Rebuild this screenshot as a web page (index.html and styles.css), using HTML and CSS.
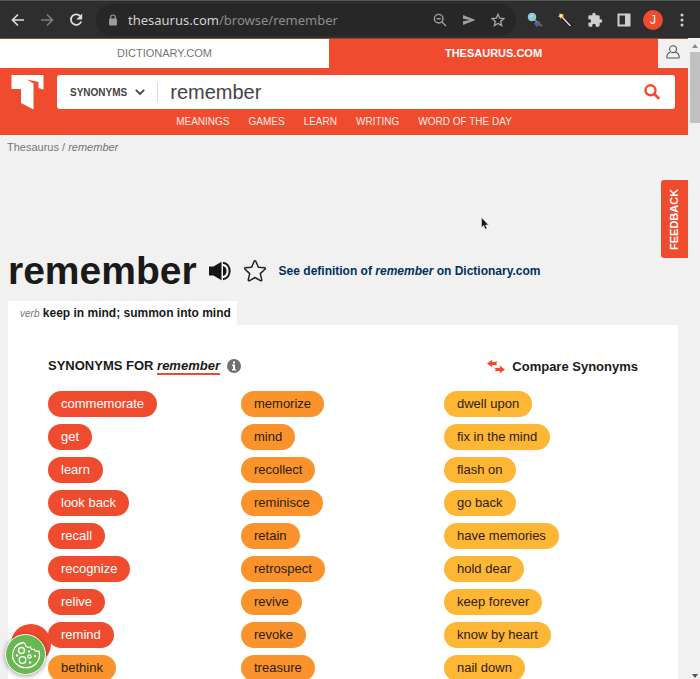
FILE: index.html
```html
<!DOCTYPE html>
<html lang="en">
<head>
<meta charset="utf-8">
<title>Synonyms of remember | Thesaurus.com</title>
<link rel="stylesheet" href="styles.css">
</head>
<body>
<div class="toolbar">
  <div class="nav-buttons">
    <button class="tool" aria-label="Back"><svg width="16" height="16" viewBox="0 0 16 16" fill="none" stroke="#dcdcdc" stroke-width="1.7"><path d="M14 8H3M8 2.500 2.500 8 8 13.500"/></svg></button>
    <button class="tool" aria-label="Forward"><svg width="16" height="16" viewBox="0 0 16 16" fill="none" stroke="#7c7c7c" stroke-width="1.7"><path d="M2 8h11M8 2.500 13.500 8 8 13.500"/></svg></button>
    <button class="tool" aria-label="Reload"><svg width="16" height="16" viewBox="0 0 16 16"><path d="M12.600 4.600A5.300 5.300 0 1 0 13.200 9.500" fill="none" stroke="#dcdcdc" stroke-width="1.800"/><path d="M14.200 1.600v5.900H8.300z" fill="#dcdcdc"/></svg></button>
  </div>
  <div class="omnibox">
    <svg width="10" height="12" viewBox="0 0 10 12"><rect x="1" y="4.500" width="8" height="7" rx="1" fill="#9a9a9a"/><path d="M2.700 5V3.300a2.300 2.300 0 0 1 4.600 0V5" fill="none" stroke="#9a9a9a" stroke-width="1.200"/></svg>
    <span class="url"><b>thesaurus.com</b>/browse/remember</span>
    <button class="tool" aria-label="Zoom out"><svg width="14" height="14" viewBox="0 0 14 14" fill="none" stroke="#a0a0a0" stroke-width="1.400"><circle cx="5.700" cy="5.700" r="4.300"/><path d="M9 9l4 4M3.700 5.700h4" /></svg></button>
    <button class="tool" aria-label="Share"><svg width="14" height="14" viewBox="0 0 14 14"><path d="M1 2l12.500 5L1 12V8.200L8 7 1 5.800z" fill="#a0a0a0"/></svg></button>
    <button class="tool" aria-label="Bookmark"><svg width="14" height="14" viewBox="0 0 14 14" fill="none" stroke="#a8a8a8" stroke-width="1.300"><path d="M7 1.300l1.700 3.900 4.200.4-3.200 2.800 1 4.200L7 10.400l-3.700 2.200 1-4.200L1.100 5.600l4.200-.4z"/></svg></button>
  </div>
  <div class="extensions">
    <button class="tool" aria-label="Search extension"><svg width="16" height="16" viewBox="0 0 16 16"><path d="M7 11.500l1.500-2 3-.5 2 1.500-.5 3-2 .5-1.500 1-1-1.500z" fill="#49658f"/><path d="M12.500 13l2.500-1-.5 3z" fill="#a36a45"/><circle cx="5" cy="5" r="3.800" fill="#83ccd8" stroke="#b5c8cd"/><path d="M3 4.800l2-1.500" stroke="#e5fafc"/><path d="M7.800 7.800l2.200 2.200" stroke="#8a9ba5" stroke-width="1.300"/></svg></button>
    <button class="tool" aria-label="Magic wand"><svg width="16" height="16" viewBox="0 0 16 16"><path d="M4 4l10 10.500" stroke="#141414" stroke-width="3"/><path d="M5.500 5.500l8 8.500" stroke="#dedede" stroke-width="1.500"/><path d="M3.700.8l1 1.600 2.100-.4-.6 1.900.9 1.600-2.100.2-1.300 1.400-.8-1.800-1.900-.8 1.500-1.100-.2-2.100 1.700.9z" fill="#f6b64e"/><circle cx="3.900" cy="3.700" r="1.400" fill="#fff0c0"/></svg></button>
    <button class="tool" aria-label="Extensions"><svg width="16" height="16" viewBox="0 0 24 24"><path d="M20.500 11H19V7a2 2 0 0 0-2-2h-4V3.500a2.500 2.500 0 0 0-5 0V5H4a2 2 0 0 0-2 2v3.800h1.500a2.700 2.700 0 0 1 0 5.400H2V20a2 2 0 0 0 2 2h3.800v-1.500a2.700 2.700 0 0 1 5.400 0V22H17a2 2 0 0 0 2-2v-4h1.500a2.500 2.500 0 0 0 0-5z" fill="#cfcfcf"/></svg></button>
    <button class="tool" aria-label="Side panel"><svg width="14" height="14" viewBox="0 0 14 14"><path d="M.5.500h13v13H.5zM2.500 2.500v9h5.500v-9z" fill="#cfcfcf" fill-rule="evenodd"/></svg></button>
    <button class="avatar">J</button>
    <button class="tool" aria-label="Menu"><svg width="4" height="14" viewBox="0 0 4 14" fill="#d0d0d0"><circle cx="2" cy="2" r="1.500"/><circle cx="2" cy="7" r="1.500"/><circle cx="2" cy="12" r="1.500"/></svg></button>
  </div>
</div>
<div class="viewport">
  <div class="page">
    <header>
      <div class="sites">
        <a class="site" href="#">DICTIONARY.COM</a>
        <a class="site current" href="#">THESAURUS.COM</a>
        <a class="account" href="#" aria-label="Account"><svg width="14" height="14" viewBox="0 0 14 14" fill="none" stroke="#555" stroke-width="1.100"><circle cx="7" cy="4.200" r="3.400"/><path d="M4.300 7.200C1.800 8 .8 9.800.7 12.200q0 .8.800.8h11q.8 0 .8-.8C13.200 9.800 12.200 8 9.700 7.200"/></svg></a>
      </div>
      <div class="search-row">
        <a class="logo" href="#" aria-label="Thesaurus.com"><svg width="33" height="35" viewBox="0 0 33 35"><path d="M.5 0H32.500V14.500L27.500 13V7L16 4.500 22.500 8.500V34.500L10 28V14H.5z" fill="#fff"/></svg></a>
        <form class="search">
          <button class="mode" type="button">SYNONYMS <svg width="10" height="6" viewBox="0 0 10 6" fill="none" stroke="#444" stroke-width="1.800"><path d="M.8.800 5 5 9.200.800"/></svg></button>
          <input class="query" type="text" value="remember" aria-label="Search">
          <button class="go" type="button" aria-label="Search"><svg width="16" height="16" viewBox="0 0 16 16" fill="none" stroke="#ef4b2e"><circle cx="6.500" cy="6.300" r="5" stroke-width="2.400"/><path d="M10 9.800l5.200 5" stroke-width="2.800"/></svg></button>
        </form>
      </div>
      <nav class="links"><a href="#">MEANINGS</a><a href="#">GAMES</a><a href="#">LEARN</a><a href="#">WRITING</a><a href="#">WORD OF THE DAY</a></nav>
    </header>
    <main>
      <div class="crumbs"><a href="#">Thesaurus</a> / <i>remember</i></div>
      <div class="headline">
        <h1>remember</h1>
        <button class="tool" aria-label="Listen"><svg width="22" height="20" viewBox="0 0 22 20"><path d="M0 5.500h4.500L12.500 .800v18.400L4.500 14.500H0z" fill="#161616"/><path d="M14 5q3.500 1 3.500 5t-3.500 5z" fill="#161616"/><path d="M14 1.800c8.800 1.200 8.800 15.200 0 16.400" fill="none" stroke="#161616" stroke-width="2"/></svg></button>
        <button class="tool" aria-label="Save word"><svg width="24" height="22" viewBox="0 0 24 22" fill="none" stroke="#222" stroke-width="1.500" stroke-linejoin="round"><path d="M11.100 1.500q.9-1.300 1.800 0l2.500 5.700 6 .6q1.500.3.500 1.500l-4.600 4.300 1.400 6q.2 1.700-1.300 1L12 17.500l-5.400 3.100q-1.500.7-1.300-1l1.400-6L2.100 9.300q-1-1.200.5-1.500l6-.6z"/></svg></button>
        <a class="definition" href="#">See definition of <i>remember</i> on Dictionary.com</a>
      </div>
      <button class="sense"><i>verb</i> <b>keep in mind; summon into mind</b></button>
      <section class="card">
        <div class="card-head">
          <h2>SYNONYMS FOR <em>remember</em></h2>
          <button class="tool" aria-label="Information"><svg width="14" height="14" viewBox="0 0 14 14"><circle cx="7" cy="7" r="7" fill="#707070"/><path d="M6 2.500h2v2H6zM5 5.500h3v4.500h1v1.500H5V10h1V7H5z" fill="#fff"/></svg></button>
          <a class="compare" href="#"><svg width="18" height="15" viewBox="0 0 18 15" fill="#ef4b2e"><path d="M0 4.500 5.500.500 5 3 11 2.800 9 4.600 10.500 6.300 5 6 5.500 8.500zM18 10.500l-5.500-4 .5 2.500-6-.2 2 1.800-1.500 1.700 5.500-.3-.5 2.500z"/></svg>Compare Synonyms</a>
        </div>
        <div class="columns">
          <ul>
            <li><a href="#">commemorate</a></li><li><a href="#">get</a></li><li><a href="#">learn</a></li><li><a href="#">look back</a></li><li><a href="#">recall</a></li><li><a href="#">recognize</a></li><li><a href="#">relive</a></li><li><a href="#">remind</a></li><li><a class="medium" href="#">bethink</a></li>
          </ul>
          <ul>
            <li><a class="medium" href="#">memorize</a></li><li><a class="medium" href="#">mind</a></li><li><a class="medium" href="#">recollect</a></li><li><a class="medium" href="#">reminisce</a></li><li><a class="medium" href="#">retain</a></li><li><a class="medium" href="#">retrospect</a></li><li><a class="medium" href="#">revive</a></li><li><a class="medium" href="#">revoke</a></li><li><a class="medium" href="#">treasure</a></li>
          </ul>
          <ul class="weak">
            <li><a href="#">dwell upon</a></li><li><a href="#">fix in the mind</a></li><li><a href="#">flash on</a></li><li><a href="#">go back</a></li><li><a href="#">have memories</a></li><li><a href="#">hold dear</a></li><li><a href="#">keep forever</a></li><li><a href="#">know by heart</a></li><li><a href="#">nail down</a></li>
          </ul>
        </div>
      </section>
    </main>
  </div>
  <div class="scrollbar">
    <svg width="6" height="4" viewBox="0 0 6 4"><path d="M0 4l3-4 3 4z" fill="#8a8a8a"/></svg>
    <div class="thumb"></div>
    <svg width="6" height="4" viewBox="0 0 6 4"><path d="M0 0h6L3 4z" fill="#505050"/></svg>
  </div>
  <button class="feedback">FEEDBACK</button>
  <div class="bubble"></div>
  <button class="cookies" aria-label="Cookie settings"><svg width="30" height="28" viewBox="0 0 30 28" fill="none" stroke="#fff" stroke-width="1.300"><path d="M12.500 1.500C5.500 2.500 1.500 8 1.500 14c0 7 6 12.700 13.500 12.700S28.500 21 28.500 14c0-1.500-.2-2.700-.7-4-2 .8-3.800.2-4.300-1.700-2.300.7-3.900-.3-3.900-2.300-2.500 1-4.800.2-5-1.800-.1-1-.8-2-2.100-2.700z"/><circle cx="10.500" cy="9.500" r="3"/><circle cx="11.500" cy="19" r="3.300"/><circle cx="18.500" cy="15.500" r="1.700"/><g fill="#fff" stroke="none"><circle cx="6" cy="14.500" r="1.200"/><circle cx="18" cy="10.500" r="1.200"/><circle cx="19" cy="21.500" r="1.300"/><circle cx="24" cy="15" r="1.200"/></g></svg></button>
  <svg class="pointer" width="8" height="13" viewBox="0 0 8 13"><path d="M.5.500v10l2.200-2 1.500 3.700 1.800-.8L4.500 8h3z" fill="#161616" stroke="#ddd" stroke-width=".6"/></svg>
</div>
</body>
</html>
```
FILE: styles.css
```css
* { box-sizing: border-box; }
body {
  margin: 0;
  height: 100vh;
  display: flex;
  flex-direction: column;
  overflow: hidden;
  background: #f1f1f1;
  color: #1a1a1a;
  font-family: "Liberation Sans", Arial, sans-serif;
}
a { color: inherit; text-decoration: none; }
button { border: 0; padding: 0; margin: 0; background: none; color: inherit; font-family: inherit; }
svg { display: block; }
.tool { flex: none; }

.toolbar {
  flex: none;
  display: flex;
  align-items: center;
  height: 38px;
  padding-right: 16px;
  background: #2e2e2e;
  border-top: 1px solid #555;
}
.nav-buttons { display: flex; gap: 13px; padding: 0 12px 0 10px; }
.omnibox {
  flex: 1;
  display: flex;
  align-items: center;
  gap: 15px;
  height: 32px;
  padding: 0 11px 0 12px;
  border-radius: 16px;
  background: #272727;
}
.url {
  flex: 1;
  margin-left: -5px;
  color: #8d8d8d;
  font: 13px "Noto Sans", sans-serif;
}
.url b { color: #d2d2d2; font-weight: 400; }
.extensions { display: flex; align-items: center; gap: 14px; padding-left: 11px; }
.avatar {
  width: 20px;
  height: 20px;
  margin: 0 3px 0 -2px;
  border-radius: 50%;
  background: #ef4b2e;
  color: #fff;
  font-size: 12px;
}

.viewport { position: relative; flex: 1; display: flex; min-height: 0; }
.page { flex: 1; overflow: hidden; }
header { background: #ef4b2e; }
.sites { display: flex; height: 30px; border-top: 1px solid #8a4a3e; }
.site {
  flex: 1;
  display: grid;
  place-items: center;
  padding-bottom: 2px;
  background: #fff;
  color: #757575;
  font-size: 11px;
}
.current { background: #ef4b2e; color: #fff; font-weight: 700; }
.account { display: grid; place-items: center; width: 30px; padding-bottom: 4px; background: #f1f1f1; }
.search-row { display: flex; gap: 13px; padding: 7px 13px 0 11px; }
.search {
  flex: 1;
  display: flex;
  align-items: center;
  height: 34px;
  border-radius: 3px;
  background: #fff;
}
.mode {
  display: flex;
  align-items: center;
  gap: 8px;
  height: 20px;
  padding: 0 12px 0 13px;
  border-right: 1px solid #ddd;
  color: #444;
  font-size: 10px;
  font-weight: 700;
}
.query {
  flex: 1;
  min-width: 0;
  padding: 0 12px;
  border: 0;
  outline: 0;
  background: none;
  color: #444;
  font: 20px/22px "Liberation Sans", Arial, sans-serif;
}
.go { padding: 0 15px; }
.links {
  display: flex;
  justify-content: center;
  gap: 19px;
  padding: 6px 0 8px;
  color: #ffeae6;
  font-size: 10px;
  line-height: 11px;
}

main { padding: 6px 10px 0 8px; }
.crumbs { margin-left: -1px; color: #757575; font-size: 11px; line-height: 13px; }
.headline { display: flex; align-items: center; gap: 12px; margin-top: 92px; }
h1 { margin: 0; font-size: 39px; line-height: 50px; }
.definition { color: #00305f; font-size: 12px; font-weight: 700; }
.sense {
  display: block;
  height: 24px;
  margin-top: 5px;
  padding: 0 6px 0 12px;
  background: #fff;
  color: #1a1a1a;
  font-size: 12px;
}
.sense i { color: #757575; font-size: 10px; }
.card { padding: 31px 40px 0; background: #fff; }
.card-head { display: flex; align-items: center; gap: 7px; height: 20px; margin-bottom: 15px; }
h2 { margin: 0; font-size: 13px; line-height: 15px; }
h2 em { display: inline-block; border-bottom: 2px solid #ef4b2e; }
.compare { display: flex; align-items: center; gap: 7px; margin-left: auto; font-size: 13px; font-weight: 700; }
.columns { display: grid; grid-template-columns: 193fr 203fr 194fr; }
ul { display: grid; justify-items: start; align-content: start; gap: 7px; margin: 0; padding: 0; list-style: none; }
li a {
  display: block;
  padding: 0 13px;
  border-radius: 13px;
  background: #ef4b2e;
  color: #fff;
  font-size: 13px;
  line-height: 26px;
}
.weak a { background: #fdb735; color: #2d2010; }
li .medium { background: #fa932c; color: #2d1c0c; }

.scrollbar {
  flex: none;
  display: flex;
  flex-direction: column;
  align-items: center;
  width: 12px;
  padding: 6px 0 1px 2px;
  background: #f1f1f1;
}
.thumb { width: 100%; height: 71px; margin: 4px 0 auto; background: #c1c1c1; }
.feedback {
  position: absolute;
  top: 142px;
  right: 12px;
  width: 27px;
  height: 78px;
  border-radius: 0 3px 3px 0;
  background: #ef4b2e;
  color: #fff;
  font-size: 11px;
  font-weight: 700;
  line-height: 27px;
  writing-mode: vertical-rl;
  transform: rotate(180deg);
}
.bubble {
  position: absolute;
  bottom: 15px;
  left: 11px;
  width: 40px;
  height: 40px;
  border-radius: 50%;
  background: #ef4b2e;
}
.cookies {
  position: absolute;
  bottom: 4px;
  left: 5px;
  display: grid;
  place-items: center;
  width: 41px;
  height: 41px;
  border: 1px solid #fff;
  border-radius: 50%;
  background: #68b74f;
  box-shadow: 0 1px 5px #0006;
}
.pointer { position: absolute; top: 179px; left: 481px; }
```
